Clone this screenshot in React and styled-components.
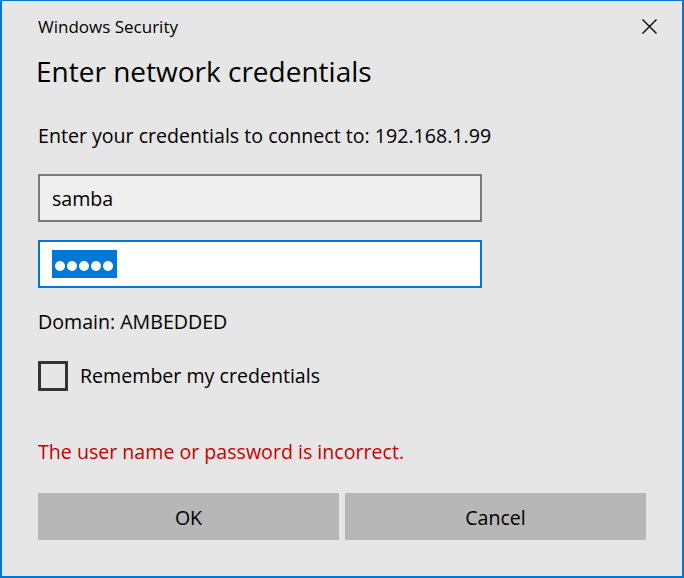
import React from "react";
import styled, { createGlobalStyle } from "styled-components";

const Global = createGlobalStyle`
  html, body { margin: 0; padding: 0; background: #e6e6e6; }
  * { box-sizing: border-box; }
`;

const FONT = `"Segoe UI", "Open Sans", "Noto Sans", sans-serif`;

const Window = styled.div`
  width: 684px;
  height: 578px;
  background: #e6e6e6;
  border: 2px solid #0078d7;
  border-top-width: 1px;
  font-family: ${FONT};
  color: #000;
  display: flex;
  flex-direction: column;
  padding-left: 36px;
`;

const Header = styled.div`
  display: flex;
  align-items: center;
  justify-content: space-between;
  height: 24px;
  margin-top: 14.4px;
`;

const Caption = styled.div`
  font-size: 17px;
  line-height: 24px;
`;

const Close = styled.button`
  border: 0;
  background: transparent;
  padding: 0;
  margin-right: 25px;
  margin-top: -2px;
  width: 15px;
  height: 15px;
  display: flex;
`;

const Title = styled.h1`
  margin: 13.2px 0 0 -2px;
  font-weight: 400;
  font-size: 28px;
  line-height: 36px;
`;

const Text = styled.div`
  font-size: 19.6px;
  line-height: 26px;
  margin-top: ${(p) => p.$mt}px;
  color: ${(p) => p.$color || "#000"};
`;

const Input = styled.div`
  width: 444px;
  height: 48px;
  margin-top: ${(p) => p.$mt}px;
  border: 2px solid ${(p) => (p.$focused ? "#0078d7" : "#7a7a7a")};
  background: ${(p) => (p.$focused ? "#ffffff" : "#efefef")};
  display: flex;
  align-items: center;
  padding: 2px 0 0 12px;
  font-size: 19.6px;
`;

const Selection = styled.span`
  display: flex;
  align-items: center;
  gap: 2px;
  height: 28px;
  width: 65px;
  padding: 4px 0 0 3px;
  margin-top: -2px;
  background: #0078d7;
`;

const Dot = styled.span`
  width: 10px;
  height: 10px;
  border-radius: 50%;
  background: #fff;
`;

const CheckRow = styled.label`
  display: flex;
  align-items: center;
  gap: 12px;
  margin-top: 25.6px;
  height: 30px;
  font-size: 19.6px;
  line-height: 26px;
`;

const Box = styled.span`
  width: 30px;
  height: 30px;
  border: 3px solid #333333;
  flex: none;
`;

const Buttons = styled.div`
  display: flex;
  gap: 6px;
  margin-top: 28.3px;
`;

const Button = styled.button`
  width: 301px;
  height: 47px;
  border: 0;
  background: #b7b7b7;
  font-family: ${FONT};
  font-size: 19.6px;
  color: #000;
  padding: 2px 0 0;
`;

export default function App() {
  return (
    <>
      <Global />
      <Window>
        <Header>
          <Caption>Windows Security</Caption>
          <Close aria-label="Close">
            <svg width="15" height="15" viewBox="0 0 15 15">
              <path d="M0.5 0.5 L14.5 14.5 M14.5 0.5 L0.5 14.5" stroke="#000" strokeWidth="1.4" fill="none" />
            </svg>
          </Close>
        </Header>
        <Title>Enter network credentials</Title>
        <Text $mt={34.3}>Enter your credentials to connect to: 192.168.1.99</Text>
        <Input $mt={25.1}>samba</Input>
        <Input $mt={18} $focused>
          <Selection>
            <Dot />
            <Dot />
            <Dot />
            <Dot />
            <Dot />
          </Selection>
        </Input>
        <Text $mt={21.4}>Domain: AMBEDDED</Text>
        <CheckRow>
          <Box />
          Remember my credentials
        </CheckRow>
        <Text $mt={47.7} $color="#c80000">The user name or password is incorrect.</Text>
        <Buttons>
          <Button>OK</Button>
          <Button>Cancel</Button>
        </Buttons>
      </Window>
    </>
  );
}
